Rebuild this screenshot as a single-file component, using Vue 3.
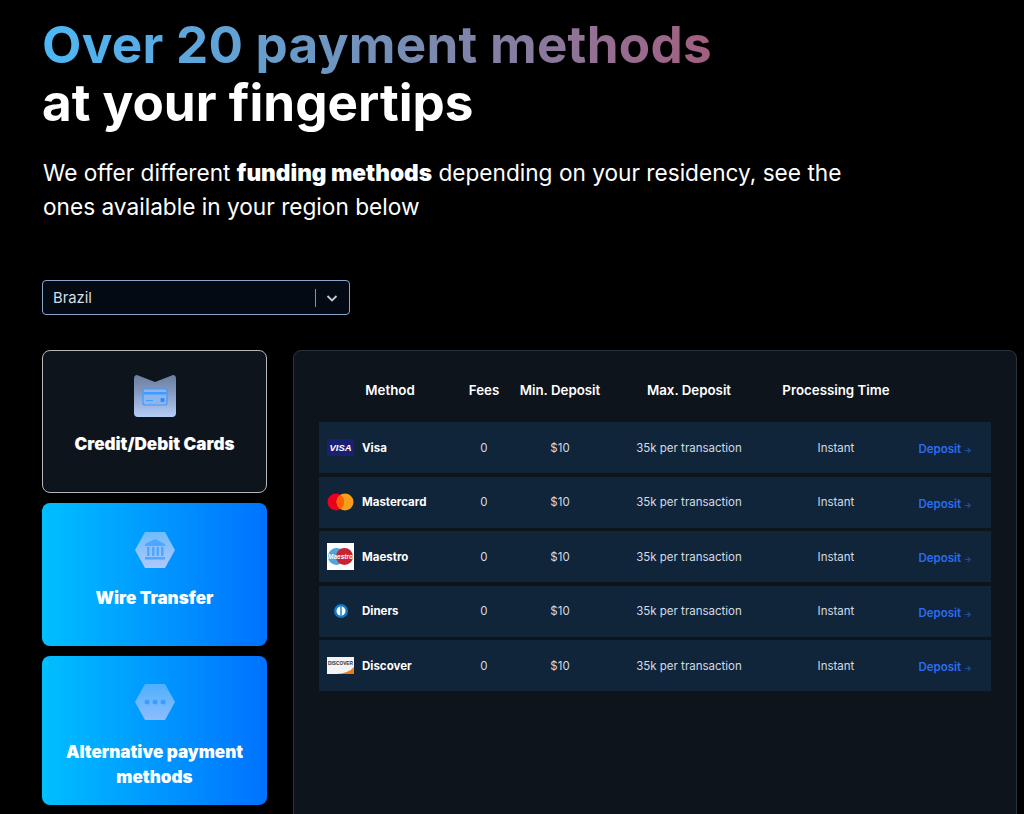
<script setup>
import { ref } from "vue";

const country = ref("Brazil");

const methods = [
  { id: "cards", label: "Credit/Debit Cards", active: true },
  { id: "wire", label: "Wire Transfer" },
  { id: "alt", label: "Alternative payment methods" },
];

const rows = [
  { name: "Visa", logo: "visa" },
  { name: "Mastercard", logo: "mastercard" },
  { name: "Maestro", logo: "maestro" },
  { name: "Diners", logo: "diners" },
  { name: "Discover", logo: "discover" },
];
</script>

<template>
  <main class="page">
    <h1>
      <span class="gradient">Over 20 payment methods</span><br />
      at your fingertips
    </h1>
    <p class="intro">
      We offer different <strong>funding methods</strong> depending on your residency, see the
      ones available in your region below
    </p>

    <div class="select">
      <span class="value">{{ country }}</span>
      <span class="divider"></span>
      <svg class="chevron" width="14" height="14" viewBox="0 0 14 14">
        <path d="M2.500 5l4.500 4.500L11.500 5" fill="none" stroke="#c3cad3" stroke-width="1.800" />
      </svg>
    </div>

    <div class="content">
      <aside class="tabs">
        <div
          v-for="m in methods"
          :key="m.id"
          class="tab"
          :class="[m.id, { active: m.active }]"
        >
          <svg v-if="m.id === 'cards'" class="tab-icon" width="44" height="44" viewBox="0 0 44 44">
            <defs>
              <linearGradient id="shield" x1="0" y1="0" x2="0" y2="1">
                <stop offset="0" stop-color="#6d7f9f" />
                <stop offset="0.35" stop-color="#7f95ba" />
                <stop offset="1" stop-color="#b5cdf9" />
              </linearGradient>
            </defs>
            <path
              d="M4 1l18 7 18-7q3 0 3 4v34q0 4-4 4H5q-4 0-4-4V5q0-4 3-4z"
              fill="url(#shield)"
            />
            <rect x="10" y="15" width="24" height="16" rx="2" fill="#8db4ec" stroke="#3d9cff" stroke-width="1.200" />
            <rect x="10.500" y="18" width="23" height="2.500" fill="#3d9cff" />
            <rect x="13" y="26" width="7" height="1" fill="#3d9cff" />
            <rect x="27.500" y="24" width="4" height="4" rx="1" fill="#2f8cff" />
          </svg>
          <svg v-else-if="m.id === 'wire'" class="tab-icon" width="42" height="36" viewBox="0 0 42 36">
            <defs>
              <linearGradient id="hexa" x1="0" y1="0" x2="0" y2="1">
                <stop offset="0" stop-color="#6fbcfb" />
                <stop offset="1" stop-color="#afc8fc" />
              </linearGradient>
            </defs>
            <path d="M11 0h20l10 18-10 18H11L1 18z" fill="url(#hexa)" />
            <path d="M21 7l-10 5v2h20v-2z" fill="#4da6ff" />
            <path d="M13 15h2.500v9H13zM18 15h2.500v9H18zM22.500 15H25v9h-2.500zM27 15h2.500v9H27zM11 25h20v2.500H11z" fill="#4da6ff" />
          </svg>
          <svg v-else class="tab-icon" width="42" height="36" viewBox="0 0 42 36">
            <defs>
              <linearGradient id="hexb" x1="0" y1="0" x2="0" y2="1">
                <stop offset="0" stop-color="#4db0ff" />
                <stop offset="1" stop-color="#8fbdfb" />
              </linearGradient>
            </defs>
            <path d="M11 0h20l10 18-10 18H11L1 18z" fill="url(#hexb)" />
            <circle cx="13" cy="18" r="2.500" fill="#3d9cff" />
            <circle cx="21" cy="18" r="2.500" fill="#3d9cff" />
            <circle cx="29" cy="18" r="2.500" fill="#3d9cff" />
          </svg>
          <span class="tab-label">{{ m.label }}</span>
        </div>
      </aside>

      <section class="panel">
        <div class="grid head">
          <span>Method</span>
          <span>Fees</span>
          <span>Min. Deposit</span>
          <span>Max. Deposit</span>
          <span>Processing Time</span>
          <span></span>
        </div>
        <div class="rows">
          <div v-for="row in rows" :key="row.name" class="grid row">
            <span class="method">
              <span class="logo">
                <svg v-if="row.logo === 'visa'" width="27" height="17" viewBox="0 0 27 17">
                  <rect width="27" height="17" fill="#1a1f71" />
                  <text x="13.500" y="12" class="visa-text">VISA</text>
                </svg>
                <svg v-else-if="row.logo === 'mastercard'" width="27" height="18" viewBox="0 0 27 18">
                  <circle cx="9" cy="9" r="8.500" fill="#eb001b" />
                  <circle cx="18" cy="9" r="8.500" fill="#f79e1b" />
                  <path d="M13.500 2a8.500 8.500 0 0 1 0 14 8.500 8.500 0 0 1 0-14z" fill="#ff5f00" />
                </svg>
                <svg v-else-if="row.logo === 'maestro'" width="27" height="27" viewBox="0 0 27 27">
                  <rect width="27" height="27" fill="#fff" />
                  <circle cx="9.500" cy="13.500" r="8.500" fill="#4fa5dc" />
                  <circle cx="17.500" cy="13.500" r="8.500" fill="#c8232f" />
                  <text x="13.500" y="15.500" class="maestro-text">Maestro</text>
                </svg>
                <svg v-else-if="row.logo === 'diners'" width="14" height="14" viewBox="0 0 14 14">
                  <circle cx="7" cy="7" r="7" fill="#1278c8" />
                  <circle cx="7" cy="7" r="4.500" fill="#fff" />
                  <rect x="6.300" y="2.500" width="1.400" height="9" fill="#1278c8" />
                </svg>
                <svg v-else width="27" height="17" viewBox="0 0 27 17">
                  <rect width="27" height="17" fill="#f4f4f4" />
                  <path d="M27 10v7H10q12-1 17-7z" fill="#f07a1a" />
                  <text x="13.500" y="8" class="discover-text">DISCOVER</text>
                </svg>
              </span>
              <b>{{ row.name }}</b>
            </span>
            <span>0</span>
            <span>$10</span>
            <span>35k per transaction</span>
            <span>Instant</span>
            <a class="deposit">Deposit <i>→</i></a>
          </div>
        </div>
      </section>
    </div>
  </main>
</template>

<style scoped>
.page {
  height: 814px;
  box-sizing: border-box;
  overflow: hidden;
  padding: 15px 7px 0 42px;
  background: #000;
  color: #fff;
  font-family: Inter, "Liberation Sans", sans-serif;
}

h1 {
  margin: 0;
  font-size: 51.200px;
  line-height: 58px;
  font-weight: 700;
}

.gradient {
  background: linear-gradient(90deg, #4cb8f6 0%, #7c88ad 60%, #a35f80 100%);
  -webkit-background-clip: text;
  background-clip: text;
  color: transparent;
  letter-spacing: 0.25px;
}

.intro {
  width: 830px;
  margin: 25px 0 0 1px;
  font-size: 22.650px;
  line-height: 33.500px;
  font-weight: 400;
}

.intro strong {
  font-weight: 900;
}

.select {
  display: flex;
  align-items: center;
  width: 308px;
  height: 35px;
  box-sizing: border-box;
  margin-top: 57px;
  padding: 0 10px;
  background: #030a13;
  border: 1px solid #8aa6c8;
  border-radius: 4px;
  font-size: 14.800px;
  color: #d8dee6;
}

.value {
  flex: 1;
}

.divider {
  width: 1px;
  height: 18px;
  margin-right: 9px;
  background: #8a929c;
}

.content {
  display: flex;
  gap: 26px;
  align-items: flex-start;
  margin-top: 35px;
}

.tabs {
  display: flex;
  flex-direction: column;
  gap: 10px;
  width: 225px;
  flex-shrink: 0;
}

.tab {
  display: flex;
  flex-direction: column;
  align-items: center;
  height: 143px;
  box-sizing: border-box;
  border-radius: 8px;
  background: linear-gradient(90deg, #00bfff 0%, #0072ff 100%);
  text-align: center;
}

.tab.active {
  background: #0d141c;
  border: 1px solid #b5b8ba;
}

.tab.cards {
  padding-top: 23px;
}

.tab.wire {
  padding-top: 29px;
}

.tab.alt {
  height: 149px;
  padding-top: 28px;
}

.tab-icon {
  flex-shrink: 0;
}

.tab-label {
  margin-top: 13px;
  padding: 0 20px;
  font-size: 17.100px;
  line-height: 25px;
  font-weight: 900;
}

.wire .tab-label {
  margin-top: 17px;
}

.alt .tab-label {
  margin-top: 19px;
}

.panel {
  flex: 1;
  height: 500px;
  box-sizing: border-box;
  padding: 0 25px;
  background: #0d141c;
  border: 1px solid #2a323c;
  border-radius: 8px;
}

.grid {
  display: grid;
  grid-template-columns: 142px 46px 106px 152px 142px 84px;
  align-items: center;
  text-align: center;
}

.head {
  height: 71px;
  box-sizing: border-box;
  padding-top: 6px;
  font-size: 13.300px;
  font-weight: 600;
}

.rows {
  display: flex;
  flex-direction: column;
  gap: 3.500px;
}

.row {
  height: 51px;
  background: #10243a;
  font-size: 11.500px;
  color: #d5dbe2;
}

.method {
  display: flex;
  align-items: center;
  text-align: left;
  padding-left: 8px;
}

.method b {
  font-weight: 700;
  color: #fff;
  font-size: 11.500px;
}

.logo {
  display: flex;
  align-items: center;
  justify-content: center;
  width: 27px;
  margin-right: 8px;
}

.visa-text {
  font: italic 800 9.500px "Liberation Sans", sans-serif;
  fill: #fff;
  text-anchor: middle;
}

.maestro-text {
  font: italic 700 6.500px "Liberation Sans", sans-serif;
  fill: #fff;
  text-anchor: middle;
}

.discover-text {
  font: 700 4.800px "Liberation Sans", sans-serif;
  fill: #333;
  text-anchor: middle;
}

.deposit {
  padding-right: 8px;
  padding-top: 3px;
  font-weight: 600;
  color: #2a6df0;
  white-space: nowrap;
}

.deposit i {
  font-style: normal;
  font-size: 8px;
  color: #2257b8;
}
</style>

<style>
html,
body {
  background: #000;
}
</style>
